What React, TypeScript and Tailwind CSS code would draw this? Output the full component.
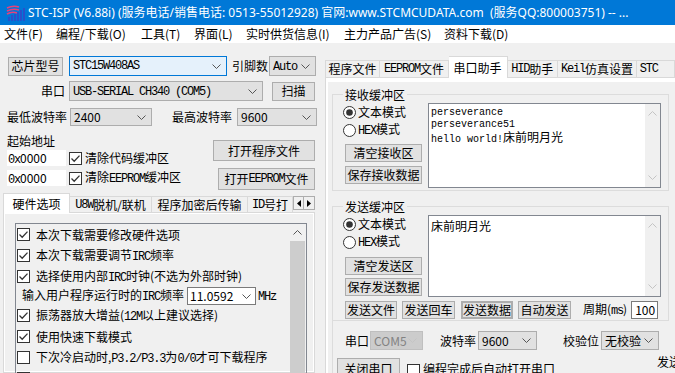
import React from "react";

// latin text drawn in the narrow bitmap style of the original dialog font
const M = ({ children }: { children: React.ReactNode }) => (
  <span className="font-['Liberation_Mono',monospace] text-[12px] tracking-[-1.2px]">{children}</span>
);

const Chev = ({ up, light }: { up?: boolean; light?: boolean }) => (
  <svg width="9" height="5" viewBox="0 0 9 5" className="shrink-0">
    <path d={up ? "M0.5 4.5L4.5 0.5L8.5 4.5" : "M0.5 0.5L4.5 4.5L8.5 0.5"} fill="none" stroke={light ? "#c4c4c4" : "#555"} />
  </svg>
);

const Chk = ({ on }: { on?: boolean }) => (
  <svg width="13" height="13" viewBox="0 0 13 13" className="shrink-0">
    <rect x="0.5" y="0.5" width="12" height="12" fill="#fff" stroke="#333" />
    {on && <path d="M2.5 6.5L5.2 9.2L10.5 3.6" fill="none" stroke="#333" strokeWidth="1.3" />}
  </svg>
);

const Radio = ({ on }: { on?: boolean }) => (
  <svg width="13" height="13" viewBox="0 0 13 13" className="shrink-0">
    <circle cx="6.5" cy="6.5" r="6" fill="#fff" stroke="#333" />
    {on && <circle cx="6.5" cy="6.5" r="3.3" fill="#333" />}
  </svg>
);

const Btn = ({ className = "", children }: { className?: string; children: React.ReactNode }) => (
  <div className={"flex items-center justify-center border border-[#adadad] bg-[#e1e1e1] leading-[14px] whitespace-nowrap shrink-0 " + className}>
    {children}
  </div>
);

const Sel = ({ className = "", children, disabled }: { className?: string; children: React.ReactNode; disabled?: boolean }) => (
  <div
    className={
      "flex items-center justify-between border pl-[3px] pr-[5px] leading-[14px] whitespace-nowrap shrink-0 " +
      (disabled ? "border-[#bfbfbf] bg-[#cccccc] text-[#838383] " : "border-[#adadad] bg-[#e1e1e1] ") +
      className
    }
  >
    <span>{children}</span>
    <Chev light={disabled} />
  </div>
);

const Logo = () => (
  <svg width="21" height="18" viewBox="0 0 21 18" className="shrink-0">
    <path d="M2 4Q8 1 14 3M2 7Q8 4 14 6M2 10Q7 7 12 9" fill="none" stroke="#e8407a" strokeWidth="1.6" />
    <path d="M4 13v4M7 11v6M10 10v7M13 8v9M16 6v11M19 4v13" stroke="#3348c8" strokeWidth="1.6" />
  </svg>
);

const ListItem = ({ on, children }: { on?: boolean; children: React.ReactNode }) => (
  <div className="h-[21px] flex items-center shrink-0 whitespace-nowrap">
    <span className="ml-[1px]"><Chk on={on} /></span>
    <span className="ml-[6px] leading-[14px]">{children}</span>
  </div>
);

const TextBox = ({ className = "", children }: { className?: string; children: React.ReactNode }) => (
  <div className={"flex border border-[#828790] bg-white shrink-0 " + className}>
    <div className="flex-1 pl-[2px] pt-[3px] overflow-hidden">{children}</div>
    <div className="w-[15px] bg-[#f0f0f0] flex flex-col items-center justify-between py-[7px]">
      <Chev up light />
      <Chev light />
    </div>
  </div>
);

export default function App() {
  return (
    <div className="w-[675px] h-[373px] overflow-hidden bg-[#f0f0f0] text-black text-[12px] font-['Noto_Sans_CJK_SC',sans-serif] flex flex-col">
      <div className="h-[25px] shrink-0 bg-[#0078d7] flex items-center pl-[5px] text-white whitespace-pre overflow-hidden">
        <Logo />
        <span className="ml-[2px] leading-[14px] font-['Noto_Sans','Noto_Sans_CJK_SC',sans-serif]">STC-ISP (V6.88i) (服务电话/销售电话: 0513-55012928) 官网:www.STCMCUDATA.com  (服务QQ:800003751) -- ...</span>
      </div>
      <div className="h-[18px] shrink-0 bg-white flex items-center pl-[4px] leading-[14px] whitespace-nowrap">
        <span className="w-[52px]">文件(F)</span>
        <span className="w-[85px]">编程/下载(O)</span>
        <span className="w-[53px]">工具(T)</span>
        <span className="w-[52px]">界面(L)</span>
        <span className="w-[98px]">实时供货信息(I)</span>
        <span className="w-[100px]">主力产品广告(S)</span>
        <span>资料下载(D)</span>
      </div>

      <div className="flex-1 flex min-h-0">
        {/* left side */}
        <div className="w-[320px] shrink-0 flex flex-col">
          <div className="mt-[13px] h-[20px] flex items-center">
            <Btn className="ml-[8px] w-[55px] h-[19px]">芯片型号</Btn>
            <div className="ml-[6px] w-[158px] h-[20px] border border-[#0078d7] bg-[#e5f1fb] flex items-center justify-between pl-[3px] pr-[5px]">
              <M>STC15W408AS</M>
              <Chev />
            </div>
            <span className="ml-[5px] w-[37px] leading-[14px]">引脚数</span>
            <Sel className="w-[47px] h-[20px]"><M>Auto</M></Sel>
          </div>

          <div className="mt-[5px] h-[20px] flex items-center">
            <span className="w-[65px] text-right leading-[14px]">串口</span>
            <Sel className="ml-[4px] w-[194px] h-[20px]"><M>USB-SERIAL CH340 (COM5)</M></Sel>
            <Btn className="ml-[9px] w-[43px] h-[19px]">扫描</Btn>
          </div>

          <div className="mt-[7px] h-[18px] flex items-center">
            <span className="ml-[7px] w-[63px] leading-[14px]">最低波特率</span>
            <Sel className="w-[82px] h-[18px]">2400</Sel>
            <span className="ml-[20px] w-[65px] leading-[14px]">最高波特率</span>
            <Sel className="w-[80px] h-[18px]">9600</Sel>
          </div>

          <div className="mt-[6px] flex">
            <div className="ml-[7px] flex flex-col">
              <span className="h-[17px] leading-[17px]">起始地址</span>
              <div className="mt-[1px] h-[16px] flex items-center whitespace-nowrap">
                <span className="w-[59px] h-[16px] bg-white pl-[1px] leading-[16px]"><M>0x</M>0000</span>
                <span className="ml-[3px]"><Chk on /></span>
                <span className="ml-[3px] leading-[14px]">清除代码缓冲区</span>
              </div>
              <div className="mt-[4px] h-[16px] flex items-center whitespace-nowrap">
                <span className="w-[59px] h-[16px] bg-white pl-[1px] leading-[16px]"><M>0x</M>0000</span>
                <span className="ml-[3px]"><Chk on /></span>
                <span className="ml-[3px] leading-[14px]">清除<M>EEPROM</M>缓冲区</span>
              </div>
            </div>
            <div className="ml-auto mr-[5px] flex flex-col items-end">
              <Btn className="mt-[8px] w-[102px] h-[21px]">打开程序文件</Btn>
              <Btn className="mt-[7px] w-[97px] h-[22px]">打开<M>EEPROM</M>文件</Btn>
            </div>
          </div>

          <div className="mt-[3px] ml-[3px] w-[312px] h-[19px] flex items-end relative z-10 whitespace-nowrap leading-[14px]">
            <div className="w-[67px] h-[20px] -mb-px bg-white border border-[#d9d9d9] border-b-0 flex items-center justify-center">硬件选项</div>
            <div className="w-[82px] h-[16px] border border-[#d9d9d9] border-l-0 border-b-0 flex items-center justify-center"><M>U8W</M>脱机/联机</div>
            <div className="w-[96px] h-[16px] border border-[#d9d9d9] border-l-0 border-b-0 flex items-center justify-center">程序加密后传输</div>
            <div className="w-[45px] h-[16px] border border-[#d9d9d9] border-l-0 border-b-0 flex items-center pl-[4px] overflow-hidden"><M>ID</M>号打</div>
            <div className="mb-[2px] flex">
              <div className="w-[11px] h-[14px] border border-[#adadad] bg-[#f0f0f0] flex items-center justify-center">
                <svg width="4" height="7" viewBox="0 0 4 7"><path d="M4 0L0 3.5L4 7Z" fill="#000" /></svg>
              </div>
              <div className="w-[11px] h-[14px] border border-l-0 border-[#adadad] bg-[#f0f0f0] flex items-center justify-center">
                <svg width="4" height="7" viewBox="0 0 4 7"><path d="M0 0L4 3.5L0 7Z" fill="#000" /></svg>
              </div>
            </div>
          </div>
          <div className="ml-[3px] w-[312px] flex-1 border border-[#d9d9d9] bg-white p-px flex min-h-0">
            <div className="flex-1 bg-[#f0f0f0] pl-[10px] pt-[9px] flex min-h-0">
              <div className="w-[292px] h-[200px] border border-[#828790] flex">
                <div className="flex-1 flex flex-col overflow-hidden">
                  <ListItem on>本次下载需要修改硬件选项</ListItem>
                  <ListItem on>本次下载需要调节<M>IRC</M>频率</ListItem>
                  <ListItem on>选择使用内部<M>IRC</M>时钟(不选为外部时钟)</ListItem>
                  <div className="h-[18px] flex items-center shrink-0 whitespace-nowrap leading-[14px]">
                    <span className="ml-[6px]">输入用户程序运行时的<M>IRC</M>频率</span>
                    <div className="ml-[3px] w-[69px] h-[18px] border border-[#7a7a7a] bg-white flex items-center justify-between pl-[2px] pr-[4px]">
                      <span>11.0592</span>
                      <Chev />
                    </div>
                    <span className="ml-[2px]"><M>MHz</M></span>
                  </div>
                  <ListItem on>振荡器放大增益(<M>12M</M>以上建议选择)</ListItem>
                  <ListItem on>使用快速下载模式</ListItem>
                  <ListItem>下次冷启动时,<M>P3.2/P3.3</M>为<M>0/0</M>才可下载程序</ListItem>
                  <ListItem on>上电复位使用较长延时</ListItem>
                </div>
                <div className="w-[17px] flex flex-col items-center pt-[6px]">
                  <Chev up />
                  <div className="mt-[6px] w-[15px] flex-1 bg-[#cdcdcd]" />
                </div>
              </div>
            </div>
          </div>
        </div>

        {/* right side */}
        <div className="flex-1 min-w-0 pl-[5px] flex flex-col">
          <div className="mt-[13px] h-[21px] flex items-end whitespace-nowrap leading-[14px] relative z-10">
            <div className="w-[58px] h-[17px] border border-[#d9d9d9] border-b-0 flex items-center justify-center">程序文件</div>
            <div className="w-[72px] h-[17px] border border-[#d9d9d9] border-l-0 border-b-0 flex items-center justify-center"><M>EEPROM</M>文件</div>
            <div className="w-[62px] h-[22px] -mb-px bg-white border border-[#d9d9d9] border-l-0 border-b-0 flex items-center justify-center">串口助手</div>
            <div className="w-[53px] h-[17px] border border-[#d9d9d9] border-l-0 border-b-0 flex items-center justify-center"><M>HID</M>助手</div>
            <div className="w-[83px] h-[17px] border border-[#d9d9d9] border-l-0 border-b-0 flex items-center justify-center"><M>Keil</M>仿真设置</div>
            <div className="w-[40px] h-[17px] border border-[#d9d9d9] border-l-0 border-b-0 flex items-center pl-[3px]"><M>STC</M></div>
          </div>
          <div className="flex-1 border-t border-l border-[#d9d9d9] bg-white flex flex-col min-h-0">
            <div className="mt-[4px] ml-[2px] flex-1 bg-[#f0f0f0] flex flex-col min-h-0">
              <fieldset className="ml-[4px] mt-[6px] w-[337px] border border-[#dcdcdc] pl-[10px] pr-[4px] pb-[2px]">
                <legend className="px-[2px] leading-[13px]">接收缓冲区</legend>
                <div className="flex">
                  <div className="w-[85px] pt-[2px] flex flex-col">
                    <div className="h-[18px] flex items-center"><Radio on /><span className="ml-[2px] leading-[14px]">文本模式</span></div>
                    <div className="h-[18px] flex items-center"><Radio /><span className="ml-[2px] leading-[14px]"><M>HEX</M>模式</span></div>
                    <Btn className="ml-[2px] mt-[5px] w-[77px] h-[18px]">清空接收区</Btn>
                    <Btn className="ml-[2px] mt-[4px] w-[77px] h-[18px]">保存接收数据</Btn>
                  </div>
                  <TextBox className="mt-[2px] w-[233px] h-[85px]">
                    <div className="font-['Liberation_Mono',monospace] text-[10px] leading-[12px] whitespace-nowrap">
                      <div>perseverance</div>
                      <div>perseverance51</div>
                      <div>hello world!<span className="font-['Noto_Sans_CJK_SC',sans-serif] text-[12px]">床前明月光</span></div>
                    </div>
                  </TextBox>
                </div>
              </fieldset>

              <fieldset className="ml-[4px] mt-[9px] w-[337px] border border-[#dcdcdc] pl-[10px] pr-[4px] pb-[1px]">
                <legend className="px-[2px] leading-[13px]">发送缓冲区</legend>
                <div className="flex">
                  <div className="w-[85px] pt-[2px] flex flex-col">
                    <div className="h-[18px] flex items-center"><Radio on /><span className="ml-[2px] leading-[14px]">文本模式</span></div>
                    <div className="h-[18px] flex items-center"><Radio /><span className="ml-[2px] leading-[14px]"><M>HEX</M>模式</span></div>
                    <Btn className="ml-[2px] mt-[6px] w-[77px] h-[18px]">清空发送区</Btn>
                    <Btn className="ml-[2px] mt-[3px] w-[77px] h-[18px]">保存发送数据</Btn>
                  </div>
                  <TextBox className="mt-[2px] w-[233px] h-[82px]">
                    <div className="leading-[14px]">床前明月光</div>
                  </TextBox>
                </div>
                <div className="mt-[4px] h-[18px] flex items-center whitespace-nowrap">
                  <Btn className="ml-[2px] w-[52px] h-[18px]">发送文件</Btn>
                  <Btn className="ml-[5px] w-[53px] h-[18px]">发送回车</Btn>
                  <Btn className="ml-[6px] w-[52px] h-[18px] border-2 border-[#0078d7]">发送数据</Btn>
                  <Btn className="ml-[5px] w-[53px] h-[18px]">自动发送</Btn>
                  <span className="ml-[12px] leading-[14px]">周期(<M>ms</M>)</span>
                  <div className="ml-[4px] w-[27px] h-[18px] border border-[#7a7a7a] bg-white flex items-center justify-end pr-[2px] leading-[14px]">100</div>
                </div>
              </fieldset>

              <div className="ml-[4px] flex-1 border-l border-[#dcdcdc] flex flex-col whitespace-nowrap leading-[14px]">
                <div className="mt-[10px] h-[19px] flex items-center">
                  <span className="ml-[12px] w-[25px]">串口</span>
                  <Sel disabled className="w-[53px] h-[19px]">COM5</Sel>
                  <span className="ml-[17px] w-[38px]">波特率</span>
                  <Sel className="w-[59px] h-[19px]">9600</Sel>
                  <span className="ml-[26px] w-[38px]">校验位</span>
                  <Sel className="w-[58px] h-[19px]">无校验</Sel>
                </div>
                <div className="mt-[5px] flex items-start">
                  <Btn className="ml-[4px] mt-[3px] w-[63px] h-[22px]">关闭串口</Btn>
                  <span className="ml-[7px] mt-[9px]"><Chk /></span>
                  <span className="ml-[3px] mt-[7px] w-[132px]">编程完成后自动打开串口</span>
                  <span className="ml-[102px]">发送</span>
                </div>
              </div>
            </div>
          </div>
        </div>
      </div>
    </div>
  );
}
